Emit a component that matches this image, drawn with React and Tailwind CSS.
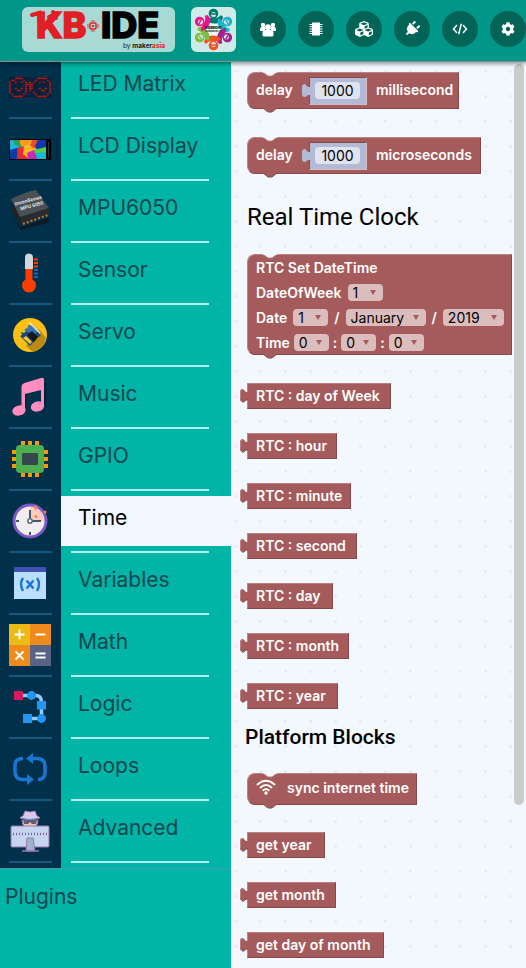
import React from "react";
import { FaCubes, FaPlug, FaCog } from "react-icons/fa";

const LED_ROWS = [
  "...XXXX.......XXXXX..",
  ".XX....X.....X.....X.",
  "X..X..X.X.X.X..X.X..X",
  "X.......XXXX........X",
  "X.......X.XX........X",
  "X..X..X.X.XX...X..X.X",
  "X...XX..X.X.....XX..X",
  "X.......X...X.......X",
  ".X.....X.....X.....X.",
  "..XXXXX.......XXXXX..",
];

function LedIcon() {
  return (
    <>
      <rect y="11" width="42" height="21" rx="2" fill="#03233a" />
      {LED_ROWS.map((row, y) =>
        row.split("").map((c, x) =>
          c === "X" ? (
            <rect key={x + "-" + y} x={x * 2 + 0.1} y={y * 2 + 11.5} width="1.700" height="1.700" rx=".4" fill="#ee0808" />
          ) : null
        )
      )}
    </>
  );
}

function LcdIcon() {
  return (
    <>
      <rect y="11" width="42" height="21" fill="#050507" />
      <rect x="1" y="12" width="36" height="19" fill="#0a62c9" />
      <path d="M1 12h11l4 8-15 5z" fill="#1fb6d8" />
      <path d="M1 22l10-3-4 12H1z" fill="#0b3ca8" />
      <path d="M4 12h8l6 9-12-4z" fill="#26a25b" />
      <path d="M11 12h13l-7 10-6-6z" fill="#ff9a1c" />
      <path d="M8 20l10-2 2 13H9z" fill="#e92b2b" />
      <path d="M15 18l8-4 5 8-8 9-6-5z" fill="#ffb52b" />
      <path d="M24 12h6l-5 9-4-4z" fill="#f14a1e" />
      <path d="M29 12h8v8l-9 2-2-4z" fill="#1137b5" />
      <path d="M24 22l13-3v8l-9 2z" fill="#4ed347" />
      <path d="M18 25l7-3 3 9h-9z" fill="#c829b8" />
      <path d="M27 25l10-1v7h-9z" fill="#18b9d6" />
      <rect x="39" y="14" width="1" height="15" fill="#34343a" />
    </>
  );
}

function ImuIcon() {
  return (
    <>
      <path d="M2 27l10 10 29-10-2 6-27 7z" fill="#0b1c29" />
      <path d="M2 10l9 17 2 8-10-12z" fill="#1f2326" />
      <path d="M11 27l29-9v7l-27 10z" fill="#292b2e" />
      <path d="M2 9Q16 2 27 0l13 18-29 9z" fill="#4b5055" />
      <path d="M14 34l25-9" stroke="#b67c34" strokeWidth="2.200" strokeDasharray="2 2" />
      <g transform="rotate(-15 20 13)" fill="#e8e8e8" fontFamily="Liberation Sans" fontWeight="700">
        <text x="6" y="12" fontSize="5">InvenSense</text>
        <text x="10" y="18" fontSize="5">MPU 6050</text>
      </g>
    </>
  );
}

function SensorIcon() {
  return (
    <>
      <path d="M16 5.500a4 4 0 0 1 8 0V17h-8z" fill="#cfd8dc" />
      <path d="M16.500 17h7v10.500a7 7 0 1 1-7 0z" fill="#ff3d00" />
      <path d="M25 7.500h4M25 11h4M25 14.500h4" stroke="#ff3d00" strokeWidth="2" />
      <path d="M25 18h4M25 21.500h4M25 25h4" stroke="#1565c0" strokeWidth="2" />
    </>
  );
}

function ServoIcon() {
  return (
    <>
      <circle cx="21" cy="21" r="17" fill="#fbc013" />
      <path d="M30 15l7 9a17 17 0 0 1-13 14l-7-6z" fill="#b98b12" />
      <path d="M11 22l2-1-1-3 3 1 5-5-1-3 3 1 2-1 7 7-1 2 2 2-3 1-8 9z" fill="#174b7f" />
      <path d="M15 16l7-5 7 6-4 4z" fill="#3977b8" />
      <path d="M18 21l5-4 6 6-4 5z" fill="#15171b" />
      <path d="M14 24l3-2 6 6-2 2z" fill="#ffc529" />
      <path d="M20 8l11 11" stroke="#f4ead0" strokeWidth="1.500" />
    </>
  );
}

function MusicIcon() {
  return (
    <>
      <path d="M15 16v19M35 6v24" stroke="#002238" strokeWidth="3" transform="translate(1 1)" />
      <ellipse cx="10" cy="34.500" rx="6.800" ry="5" transform="rotate(-15 10 34.500)" fill="#ff8dc0" />
      <ellipse cx="28.500" cy="30.500" rx="6.800" ry="5" transform="rotate(-15 28.500 30.500)" fill="#ff8dc0" />
      <path d="M12.500 11q0-3 3-4L32 2q3-1 3 2v26h-3V14l-16 4v17h-3.500z" fill="#ff8dc0" />
    </>
  );
}

function GpioIcon() {
  return (
    <>
      <path d="M14 3v36M21 3v36M28 3v36" stroke="#ff9800" strokeWidth="4" />
      <path d="M3 14h36M3 21h36M3 28h36" stroke="#ff9800" strokeWidth="4" />
      <rect x="7" y="7" width="28" height="28" rx="4" fill="#4caf50" />
      <rect x="13" y="15" width="16" height="12" rx="1" fill="#37474f" />
    </>
  );
}

function TimeIcon() {
  return (
    <>
      <circle cx="21" cy="21" r="16" fill="#f0edf0" stroke="#7e57c2" strokeWidth="3" />
      <path d="M21 21V7a14 14 0 0 1 14 14z" fill="#ffccbc" />
      <path d="M21 21V10M21 21h11M21 32v3M7 21h3" stroke="#455a64" strokeWidth="2" />
      <circle cx="21" cy="21" r="2.200" fill="#fff" stroke="#546e7a" strokeWidth="1.500" />
      <path d="M24 7h5M26.500 5v5M25.500 16.500h3M27 15v3M34.500 12h3M36 10.500v3" stroke="#ff7961" strokeWidth="1.500" />
    </>
  );
}

function VariablesIcon() {
  return (
    <>
      <rect x="5" y="5" width="32" height="32" fill="#bbdefb" />
      <rect x="5" y="5" width="32" height="5" fill="#3f51b5" />
      <path d="M14 16q-4 6 0 13M28 16q4 6 0 13M17.500 18.500l7 8M24.500 18.500l-7 8" stroke="#1976d2" strokeWidth="2.400" fill="none" />
    </>
  );
}

function MathIcon() {
  return (
    <>
      <rect width="21" height="21" fill="#ebba16" />
      <rect x="21" width="21" height="21" fill="#ef8b1b" />
      <rect y="21" width="21" height="21" fill="#ef8b1b" />
      <rect x="21" y="21" width="21" height="21" fill="#596383" />
      <path d="M5.500 10.500h10M10.500 5.500v10M26.500 10.500h10M6.500 27.500l8 8M14.500 27.500l-8 8M26.500 29.500h10M26.500 33.500h10" stroke="#fff" strokeWidth="1.800" />
    </>
  );
}

function LogicIcon() {
  return (
    <>
      <path d="M9 9.500h18q5 0 5.500 6v17H18" stroke="#90caf9" strokeWidth="3.500" fill="none" />
      <rect x="5" y="5" width="9" height="9" fill="#d81b60" />
      <circle cx="22.500" cy="9.500" r="4.400" fill="#2196f3" />
      <rect x="28" y="15" width="9" height="8.500" fill="#2196f3" />
      <rect x="14" y="28" width="9" height="9" fill="#2196f3" />
      <circle cx="32.500" cy="32.500" r="4.400" fill="#2196f3" />
    </>
  );
}

function LoopsIcon() {
  return (
    <>
      <path d="M22 10.500h6q8 0 8 8v6q0 7-7 7" stroke="#1976d2" strokeWidth="3.500" fill="none" />
      <path d="M20 31.500h-6q-8 0-8-8v-6q0-7 8-7" stroke="#1976d2" strokeWidth="3.500" fill="none" />
      <path d="M24 5v11l-7-5.500zM18 26v11l7-5.500z" fill="#1976d2" />
    </>
  );
}

function AdvancedIcon() {
  return (
    <>
      <path d="M13 10h16q0 8-8 8t-8-8z" fill="#f3c3ad" stroke="#9a76b0" />
      <path d="M14 9h14l-1 5h-4l-2-2-2 2h-4z" fill="#596077" />
      <path d="M14 6l2-5q5 2 10 0l2 5q3 1 3 2-10 3-20 0 0-1 3-2z" fill="#c8d5f2" stroke="#9a76b0" />
      <path d="M15 5h12" stroke="#efb9df" strokeWidth="1.500" />
      <rect x="2" y="16" width="38" height="21" rx="1" fill="#c5d5ef" stroke="#9a76b0" />
      <path d="M4 24h35" stroke="#77658f" strokeWidth="2.500" strokeDasharray="1 2" />
      <path d="M18 28h6l2 13h-9z" fill="#a0b1d0" stroke="#9a76b0" />
      <path d="M13 41h17" stroke="#9a76b0" strokeWidth="1.500" />
    </>
  );
}

const CATEGORIES = [
  ["LED Matrix", LedIcon],
  ["LCD Display", LcdIcon],
  ["MPU6050", ImuIcon],
  ["Sensor", SensorIcon],
  ["Servo", ServoIcon],
  ["Music", MusicIcon],
  ["GPIO", GpioIcon],
  ["Time", TimeIcon],
  ["Variables", VariablesIcon],
  ["Math", MathIcon],
  ["Logic", LogicIcon],
  ["Loops", LoopsIcon],
  ["Advanced", AdvancedIcon],
];

function Category({ name, Icon }) {
  const selected = name === "Time";
  return (
    <li className="group">
      <button className="flex w-full text-left">
        <span className="w-[61px] shrink-0 bg-[#00304a] px-[9px] pt-[5px] group-first:pt-0 group-last:pb-[5px]">
          <span className="flex h-[57px] flex-col border-b-2 border-[#16587f] pt-1">
            <svg viewBox="0 0 42 42" className="size-[42px] shrink-0 overflow-visible">
              <Icon />
            </svg>
          </span>
        </span>
        <span className="flex-1 pt-[5px] group-first:pt-0">
          <span
            className={
              "flex h-[50px] items-center pb-1.5 pl-[17px] text-[21px] " +
              (selected ? "bg-[#f0f7ff] text-black" : "text-[#124552]")
            }
          >
            {name}
          </span>
          <span className="mt-[5px] mr-[22px] ml-[10px] block h-0.5 bg-[#b3f0f3]" />
        </span>
      </button>
    </li>
  );
}

function StatementBlock({ className, children }) {
  return (
    <div
      className={
        "relative ml-4 rounded-l-lg border border-t-[#bb8282] border-l-[#bb8282] border-r-[#844949] border-b-[#844949] bg-[#a55b5b] pl-2 text-white " +
        className
      }
    >
      <svg viewBox="0 0 16 5" className="absolute -top-px left-3.5 h-[5px] w-4">
        <path d="M0 0H16L14 1L10 4H6L2 1Z" fill="#f3f8ff" />
        <path d="M2 1L6 4H10L14 1" fill="none" stroke="#bb8282" />
      </svg>
      {children}
      <svg viewBox="0 0 16 5" className="absolute -bottom-[5px] left-3.5 h-[5px] w-4">
        <path d="M0 0H15L10 4H6L1 0Z" fill="#a55b5b" />
        <path d="M1 0L6 4H10L15 0" fill="none" stroke="#844949" />
      </svg>
    </div>
  );
}

function ValueBlock({ label, width }) {
  return (
    <div
      className={
        "relative ml-4 flex h-[26px] items-center border border-t-[#bb8282] border-l-[#bb8282] border-r-[#844949] border-b-[#844949] bg-[#a55b5b] pb-0.5 pl-2 text-white " +
        width
      }
    >
      <svg viewBox="0 0 9 15" className="absolute top-1 -left-2 h-[15px] w-[9px]">
        <path d="M9 4H6L3 1Q0 1 0 4V11Q0 14 3 14L6 12H9Z" fill="#a55b5b" />
        <path d="M3 1.500Q.5 1.500 .5 4V11" fill="none" stroke="#bb8282" />
        <path d="M2 14H4L6 12H8" fill="none" stroke="#844949" />
      </svg>
      {label}
    </div>
  );
}

function DelayBlock({ unit, width }) {
  return (
    <StatementBlock className={"flex h-[37px] items-center " + width}>
      <label htmlFor={unit} className="w-[53px] pb-0.5">delay</label>
      <div className="relative mr-[9px] flex h-7 w-[58px] items-center border border-t-[#844949] border-l-[#844949] border-r-[#d6bcc4] border-b-[#d6bcc4] bg-[#b3bad5] pl-[5px]">
        <svg viewBox="0 0 9 15" className="absolute top-[5px] -left-2 h-[15px] w-[9px]">
          <path d="M9 4H6L3 1Q0 1 0 4V11Q0 14 3 14L6 12H9Z" fill="#b3bad5" />
        </svg>
        <input
          id={unit}
          defaultValue="1000"
          className="h-[17px] w-[45px] rounded bg-[#e0e3ef] text-center font-normal text-black outline-none"
        />
      </div>
      <span className="pb-0.5">{unit}</span>
    </StatementBlock>
  );
}

function Field({ value, label, width = "w-[35px]" }) {
  return (
    <span className="relative flex">
      <select
        aria-label={label}
        defaultValue={value}
        className={"h-[17px] appearance-none rounded bg-[#dbbdbd] pl-[5px] leading-[17px] font-normal text-black " + width}
      >
        <option>{value}</option>
      </select>
      <svg viewBox="0 0 6 5" className="pointer-events-none absolute top-1.5 right-[7px] h-[5px] w-1.5">
        <path d="M0 0h6L3 5z" fill="#a55b5b" />
      </svg>
    </span>
  );
}

const RTC_VALUES = [
  ["RTC : day of Week", "w-[144px]"],
  ["RTC : hour", "w-[90px]"],
  ["RTC : minute", "w-[104px]"],
  ["RTC : second", "w-[110px]"],
  ["RTC : day", "w-[86px]"],
  ["RTC : month", "w-[102px]"],
  ["RTC : year", "w-[91px]"],
];

const PLATFORM_VALUES = [
  ["get year", "w-[78px]"],
  ["get month", "w-[89px]"],
  ["get day of month", "w-[137px]"],
];

function RoundButton({ label, children }) {
  return (
    <button
      aria-label={label}
      className="flex size-9 shrink-0 items-center justify-center rounded-full bg-[#026357] text-white"
    >
      {children}
    </button>
  );
}

const COMMUNITY = [
  [0, "#00796f"],
  [60, "#1db5c9"],
  [120, "#a3238e"],
  [180, "#ef5323"],
  [240, "#7ac143"],
  [300, "#e6168b"],
];

function Header() {
  return (
    <header className="relative z-10 flex h-[62px] shrink-0 items-start border-b border-[#7f8f90] bg-[#009688] pt-[7px] pl-[22px] shadow-[0_2px_4px_rgba(0,0,0,0.4)]">
      <svg
        viewBox="0 0 153 45"
        className="h-[45px] w-[153px] shrink-0 overflow-visible rounded-md bg-[#a8dad5]"
        role="img"
        aria-label="KB IDE by makerasia"
      >
        <g fontFamily="Inter, sans-serif" fontWeight="800" fontSize="36">
          <text x="14" y="31" fill="#e11f26" stroke="#e11f26" strokeWidth="1.500">KB</text>
          <text x="79" y="31" stroke="#000" strokeWidth="1.500">IDE</text>
        </g>
        <path d="M10 8L17 6V14M27 10l8-4M31 5l3 6" stroke="#e11f26" strokeWidth="4" strokeLinecap="round" fill="none" />
        <rect x="68" y="16" width="6" height="6" rx="1" fill="none" stroke="#e11f26" strokeWidth="1.500" />
        <rect x="70" y="18" width="2" height="2" fill="#e11f26" />
        <path d="M66 17v4M76 17v4M69 14h4M69 24h4" stroke="#e11f26" strokeWidth=".8" />
        <text x="101" y="41" fontFamily="Inter, sans-serif" fontSize="6.500" fill="#222">
          by <tspan fontWeight="700">maker<tspan fill="#e11f26">asia</tspan></tspan>
        </text>
      </svg>
      <svg
        viewBox="0 0 45 45"
        className="ml-4 size-[45px] shrink-0 rounded-md bg-[#cfebe8]"
        role="img"
        aria-label="Kidbright community"
      >
        <circle cx="22.500" cy="22.500" r="14" fill="#eef8f7" />
        {COMMUNITY.map(([angle, color]) => (
          <g key={angle} transform={`rotate(${angle} 22.5 22.5)`}>
            <path d="M15 13q2-3 7-2 6 0 8-3l2 2q-1 6-5 6-7 2-12-3z" fill={color} />
            <circle cx="22.500" cy="6.500" r="4.800" fill={color} />
            <circle cx="22.500" cy="7.500" r="2.500" fill="#d9e4e2" />
            <path d="M20 7h5" stroke={color} strokeWidth="1.500" />
          </g>
        ))}
        <text x="22.500" y="22" textAnchor="middle" fontFamily="Inter, sans-serif" fontWeight="900" fontSize="3">KIDBRIGHT</text>
        <text x="22.500" y="25" textAnchor="middle" fontFamily="Inter, sans-serif" fontWeight="600" fontSize="2.500">COMMUNITY</text>
      </svg>
      <nav className="mt-1 ml-3.5 flex gap-3">
        <RoundButton label="Community">
          <svg viewBox="0 0 16 15" className="h-[15px] w-4" fill="#fff">
            <circle cx="3" cy="3" r="2.200" />
            <circle cx="13" cy="3" r="2.200" />
            <path d="M0 9V7q0-2 2-2h3v3L4 9zM16 9V7q0-2-2-2h-3v3l1 1z" />
            <circle cx="8" cy="5.300" r="3" />
            <path d="M2.500 13v-2q0-3 3-3h5q3 0 3 3v2q0 1.500-1.500 1.500H4Q2.500 14.500 2.500 13z" />
          </svg>
        </RoundButton>
        <RoundButton label="Board">
          <svg viewBox="0 0 14 14" className="size-3.5">
            <path d="M3 .500h8v13H3z" fill="#fff" />
            <path d="M.500 2.500h13M.500 4.700h13M.500 7h13M.500 9.300h13M.500 11.500h13" stroke="#fff" />
          </svg>
        </RoundButton>
        <RoundButton label="Packages"><FaCubes className="size-[18px]" /></RoundButton>
        <RoundButton label="Connect"><FaPlug className="size-4 rotate-45" /></RoundButton>
        <RoundButton label="Code">
          <svg viewBox="0 0 16 12" className="h-3 w-4" fill="none" stroke="#fff" strokeWidth="1.500">
            <path d="M5 2L1.500 6L5 10M11 2l3.500 4L11 10M9.300 .800l-2.600 10.400" />
          </svg>
        </RoundButton>
        <RoundButton label="Settings"><FaCog className="size-3.5" /></RoundButton>
      </nav>
    </header>
  );
}

export default function App() {
  return (
    <div className="flex h-screen flex-col overflow-hidden bg-[#f3f8ff] font-['Inter',sans-serif]">
      <Header />
      <div className="flex min-h-0 flex-1">
        <aside className="w-[231px] shrink-0 bg-[#00b5a5]">
          <ul>
            {CATEGORIES.map(([name, Icon]) => (
              <Category key={name} name={name} Icon={Icon} />
            ))}
          </ul>
          <button className="flex h-14 w-full items-center border-t-2 border-[#1fabb0] pl-[5px] text-[21px] text-[#124552]">
            Plugins
          </button>
        </aside>
        <main className="relative min-w-0 flex-1 overflow-hidden bg-[radial-gradient(#e4eaf7_1px,transparent_2px)] bg-[length:25px_25px] bg-[position:-8px_-3px] pt-2.5 text-[14px] font-semibold">
          <div className="flex flex-col gap-7">
            <DelayBlock unit="millisecond" width="w-[212px]" />
            <DelayBlock unit="microseconds" width="w-[234px]" />
          </div>
          <h2 className="mt-[27px] ml-4 h-8 font-['Roboto',sans-serif] text-2xl font-normal text-black">
            Real Time Clock
          </h2>
          <StatementBlock className="mt-[21px] h-[101px] w-[265px]">
            <div className="flex h-[25px] items-center">RTC Set DateTime</div>
            <div className="flex h-[25px] items-center gap-1.5">
              DateOfWeek
              <Field label="Day of week" value="1" />
            </div>
            <div className="flex h-[25px] items-center gap-1.5">
              Date
              <Field label="Day" value="1" />
              <span>/</span>
              <Field label="Month" value="January" width="w-20" />
              <span>/</span>
              <Field label="Year" value="2019" width="w-[61px]" />
            </div>
            <div className="flex h-[25px] items-center gap-1">
              Time
              <Field label="Hour" value="0" />
              <span>:</span>
              <Field label="Minute" value="0" />
              <span>:</span>
              <Field label="Second" value="0" />
            </div>
          </StatementBlock>
          <div className="mt-7 flex flex-col gap-6">
            {RTC_VALUES.map(([label, width]) => (
              <ValueBlock key={label} label={label} width={width} />
            ))}
          </div>
          <h3 className="mt-3.5 ml-3.5 h-7 font-['Roboto',sans-serif] text-[21px]/7 font-medium text-black">
            Platform Blocks
          </h3>
          <StatementBlock className="mt-[22px] flex h-8 w-[170px] items-center gap-[11px] pb-1">
            <svg viewBox="0 0 20 16" className="h-4 w-5" fill="none" stroke="#fff" strokeWidth="1.800" strokeLinecap="round">
              <path d="M1.500 5.500Q10-2 18.500 5.500M4.500 8.500Q10 3.500 15.500 8.500M7.300 11.300Q10 9 12.700 11.300" />
              <circle cx="10" cy="14" r=".8" fill="#fff" />
            </svg>
            sync internet time
          </StatementBlock>
          <div className="mt-[27px] flex flex-col gap-6">
            {PLATFORM_VALUES.map(([label, width]) => (
              <ValueBlock key={label} label={label} width={width} />
            ))}
          </div>
          <div className="absolute top-0.5 right-0.5 h-[741px] w-2.5 rounded-full bg-[#cbcbcb]" />
        </main>
      </div>
    </div>
  );
}
